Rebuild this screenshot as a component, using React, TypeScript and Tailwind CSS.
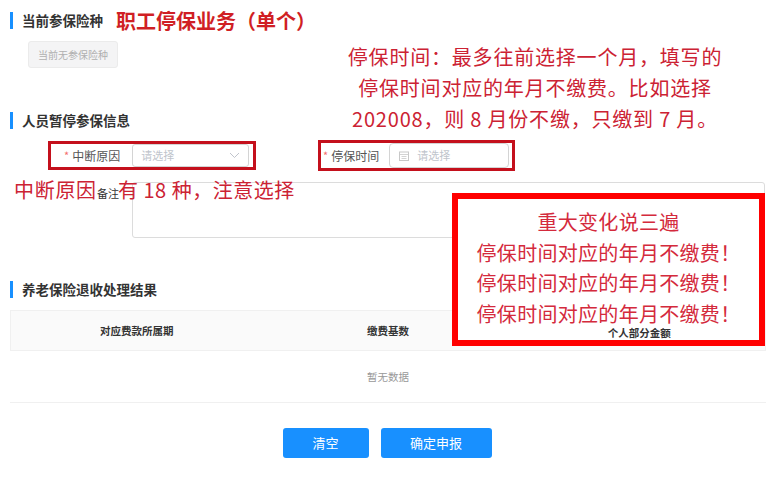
import React from "react";

const RED = "text-[#cc2233]";

function SectionTitle({ children }: { children: React.ReactNode }) {
  return (
    <div className="flex h-[17px] items-center">
      <div className="ml-[10px] h-[17px] w-[3px] bg-[#1890ff]" />
      <div className="ml-[9px] text-[13.5px] font-semibold leading-none text-[#333]">{children}</div>
    </div>
  );
}

export default function App() {
  return (
    <div
      className="relative h-[478px] w-[774px] overflow-hidden bg-white"
      style={{ fontFamily: '"Noto Sans CJK SC", "Noto Sans", sans-serif' }}
    >
      {/* section 1 */}
      <div className="pt-[12px]">
        <div className="flex h-[17px] items-center">
          <div className="ml-[10px] h-[17px] w-[3px] bg-[#1890ff]" />
          <div className="ml-[9px] text-[13.5px] font-semibold leading-none text-[#333]">当前参保险种</div>
          <div className="ml-[13px] text-[20px] font-bold leading-none text-[#d01f24]">职工停保业务（单个）</div>
        </div>
        <div className="ml-[28px] mt-[12px] flex h-[27px] w-[90px] items-center justify-center rounded-[3px] border border-[#ebebeb] bg-[#f4f4f5] text-[10px] text-[#b0b0b0]">
          当前无参保险种
        </div>
      </div>

      {/* section 2 */}
      <div className="mt-[44px]">
        <SectionTitle>人员暂停参保信息</SectionTitle>
        <div className="mt-[11px] flex items-center">
          <div className="ml-[48px] flex h-[29px] w-[208px] items-center border-[3px] border-[#c4101c] pl-[13px] pr-[4px]">
            <span className="text-[11px] leading-none text-[#f56c6c]">*</span>
            <span className="ml-[3px] text-[12px] leading-none text-[#555]">中断原因</span>
            <div className="ml-[12px] flex h-[23px] flex-1 items-center justify-between rounded-[3px] border border-[#d4d4d4] pl-[8px] pr-[8px]">
              <span className="text-[11px] leading-none text-[#c0c4cc]">请选择</span>
              <svg width="11" height="7" viewBox="0 0 11 7" fill="none">
                <path d="M1 1l4.5 4.5L10 1" stroke="#c0c4cc" strokeWidth="1" />
              </svg>
            </div>
          </div>
          <div className="ml-[62px] flex h-[31px] w-[197px] items-center border-[3px] border-[#c4101c] pl-[2px]">
            <span className="text-[11px] leading-none text-[#f56c6c]">*</span>
            <span className="ml-[3px] text-[12px] leading-none text-[#555]">停保时间</span>
            <div className="ml-[10px] flex h-[25px] w-[120px] items-center rounded-[4px] border border-[#d4d4d4] pl-[9px]">
              <svg width="10" height="10" viewBox="0 0 10 10" fill="none">
                <rect x="0.5" y="1" width="9" height="8.5" stroke="#c8c8c8" strokeWidth="1" />
                <path d="M0.5 3.5h9M2.5 5.5h5M2.5 7.5h5" stroke="#c8c8c8" strokeWidth="0.8" />
              </svg>
              <span className="ml-[8px] text-[11px] leading-none text-[#c0c4cc]">请选择</span>
            </div>
          </div>
        </div>
        <div className="mt-[11px] flex">
          <div className="ml-[97px] pt-[6px] text-[11px] leading-none text-[#333]">备注</div>
          <div className="ml-[13px] h-[56px] w-[633px] rounded-[3px] border border-[#dcdcdc]" />
        </div>
      </div>

      {/* section 3 */}
      <div className="mt-[43px]">
        <SectionTitle>养老保险退收处理结果</SectionTitle>
        <div className="ml-[10px] mt-[12px] w-[756px]">
          <div className="grid h-[41px] grid-cols-3 items-center border border-[#f0f0f0] bg-[#fafafa] text-[10.5px] font-semibold leading-[14px] text-[#333]">
            <div className="text-center">对应费款所属期</div>
            <div className="text-center">缴费基数</div>
            <div className="relative z-20 pt-[4px] text-center">个人部分金额</div>
          </div>
          <div className="flex h-[52px] items-center justify-center border-b border-[#f0f0f0] text-[10.5px] text-[#999]">
            暂无数据
          </div>
        </div>
        <div className="mt-[25px] flex justify-center gap-[12px]">
          <button className="h-[30px] w-[86px] rounded-[3px] bg-[#1890ff] text-[13px] text-white">清空</button>
          <button className="h-[30px] w-[111px] rounded-[3px] bg-[#1890ff] text-[13px] text-white">确定申报</button>
        </div>
      </div>

      {/* annotation: top right */}
      <div className={`absolute left-[330px] top-[41px] w-[410px] text-center text-[20px] leading-[31px] tracking-[0.8px] ${RED}`}>
        <div>停保时间：最多往前选择一个月，填写的</div>
        <div>停保时间对应的年月不缴费。比如选择</div>
        <div>202008，则 8 月份不缴，只缴到 7 月。</div>
      </div>

      {/* annotation: reason */}
      <div className={`absolute left-[14px] top-[175px] text-[20px] leading-[30px] tracking-[0.7px] ${RED}`}>中断原因</div>
      <div className={`absolute left-[118px] top-[175px] text-[20px] leading-[30px] tracking-[0.5px] ${RED}`}>有 18 种，注意选择</div>

      {/* big box */}
      <div className="absolute left-[452px] top-[193px] z-10 flex h-[153px] w-[313px] flex-col items-center gap-[10.5px] border-[6px] border-[#f00] bg-white pt-[13px] text-[20px] leading-[20px] tracking-[0.3px] text-[#d42a3c]">
        <div>重大变化说三遍</div>
        <div>停保时间对应的年月不缴费！</div>
        <div>停保时间对应的年月不缴费！</div>
        <div>停保时间对应的年月不缴费！</div>
      </div>
    </div>
  );
}
